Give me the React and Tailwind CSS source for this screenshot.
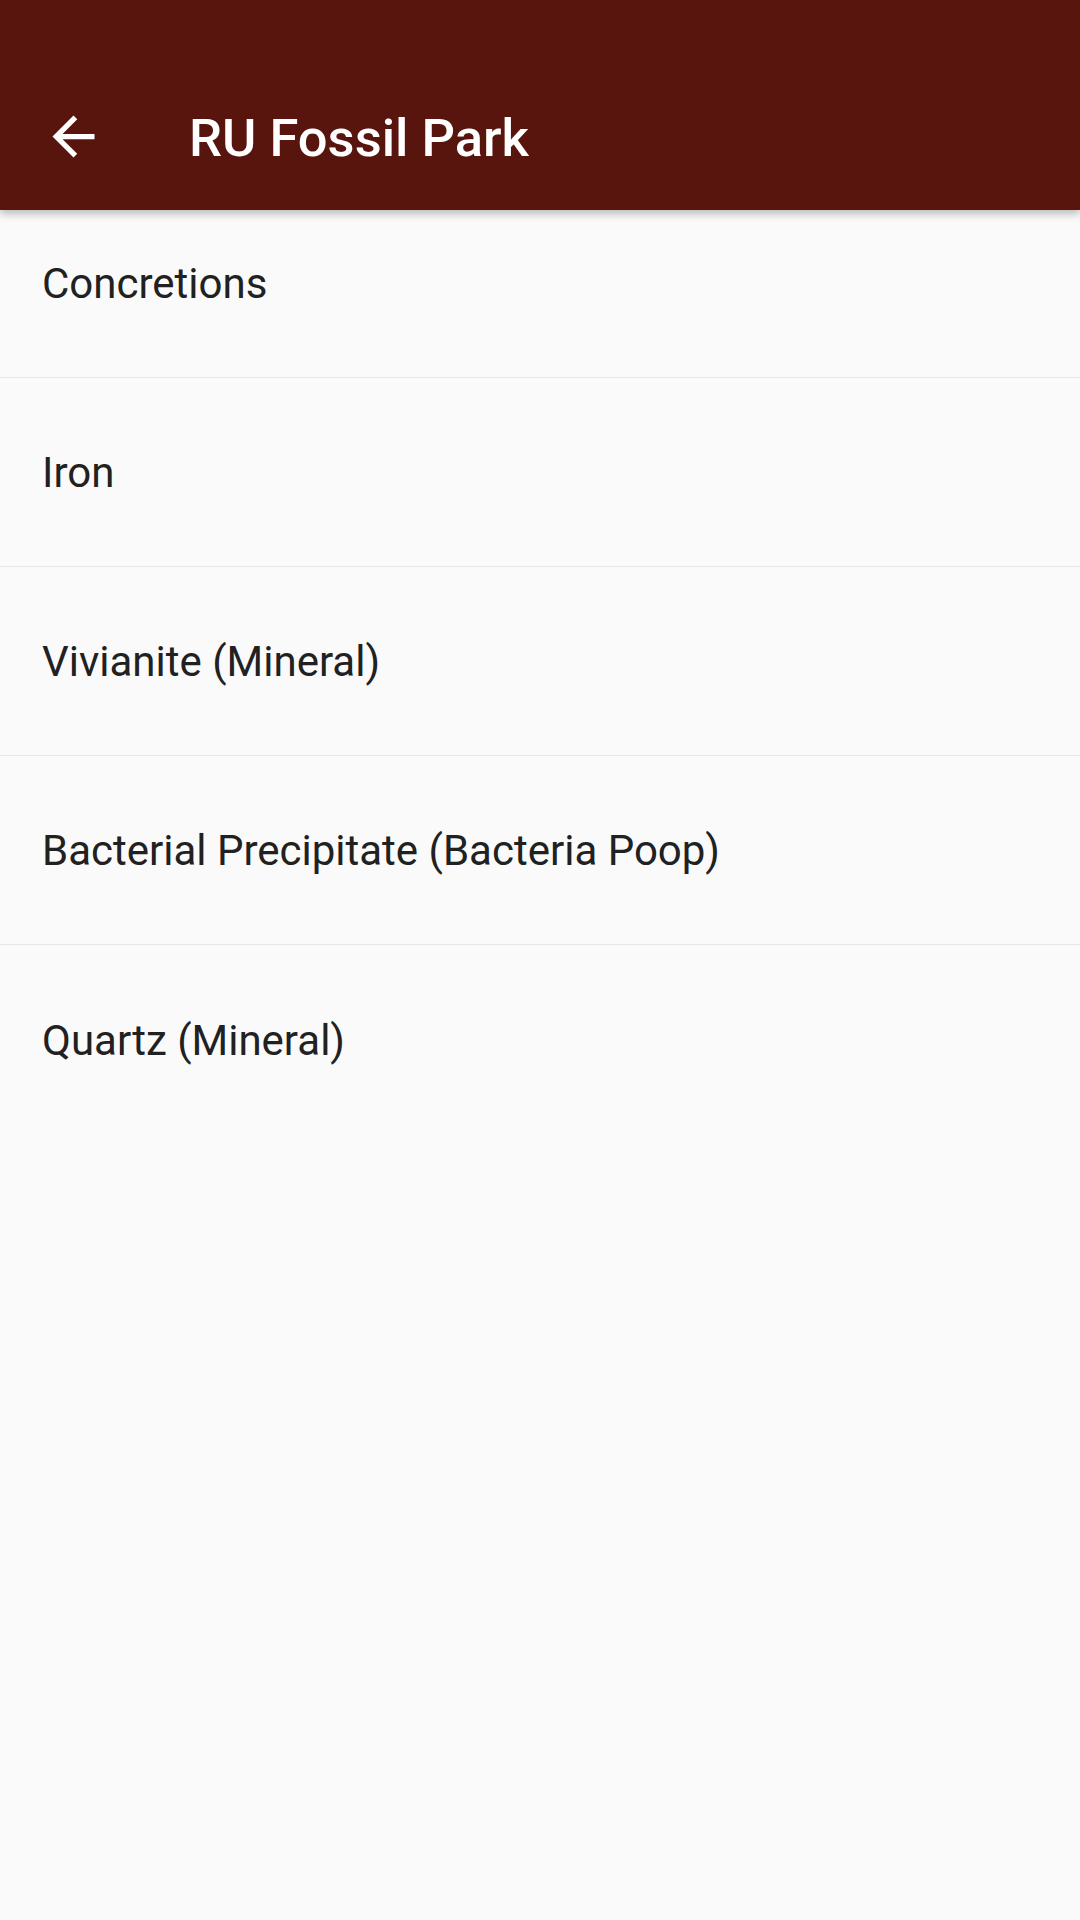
export default function App() {
  const items = [
    "Concretions",
    "Iron",
    "Vivianite (Mineral)",
    "Bacterial Precipitate (Bacteria Poop)",
    "Quartz (Mineral)",
  ];
  return (
    <div
      className="w-[1080px] h-[1920px] bg-[#fafafa] overflow-hidden flex flex-col"
      style={{ fontFamily: "Roboto, 'Noto Sans', sans-serif" }}
    >
      <div className="relative z-10 h-[210px] shrink-0 bg-[#58150e] shadow-[0_4px_8px_rgba(0,0,0,0.25)] flex flex-col">
        <div className="h-[63px]" />
        <div className="h-[147px] flex items-center">
          <div className="w-[189px] pl-[42px] flex items-center">
            <svg width="63" height="63" viewBox="0 0 24 24" fill="#ffffff">
              <path d="M20 11H7.83l5.59-5.59L12 4l-8 8 8 8 1.41-1.41L7.83 13H20v-2z" />
            </svg>
          </div>
          <div className="text-white text-[52.5px] font-medium leading-none pt-[3px]">
            RU Fossil Park
          </div>
        </div>
      </div>
      <div className="-mt-[21px] flex flex-col">
        {items.map((t, i) => (
          <div
            key={t}
            className={
              i < items.length - 1
                ? "h-[189px] flex items-center pl-[42px] border-b-[1.5px] border-[#e6e6e6]"
                : "h-[189px] flex items-center pl-[42px]"
            }
          >
            <span className="text-[42px] text-[#212121] leading-none pt-[2px]">{t}</span>
          </div>
        ))}
      </div>
    </div>
  );
}
